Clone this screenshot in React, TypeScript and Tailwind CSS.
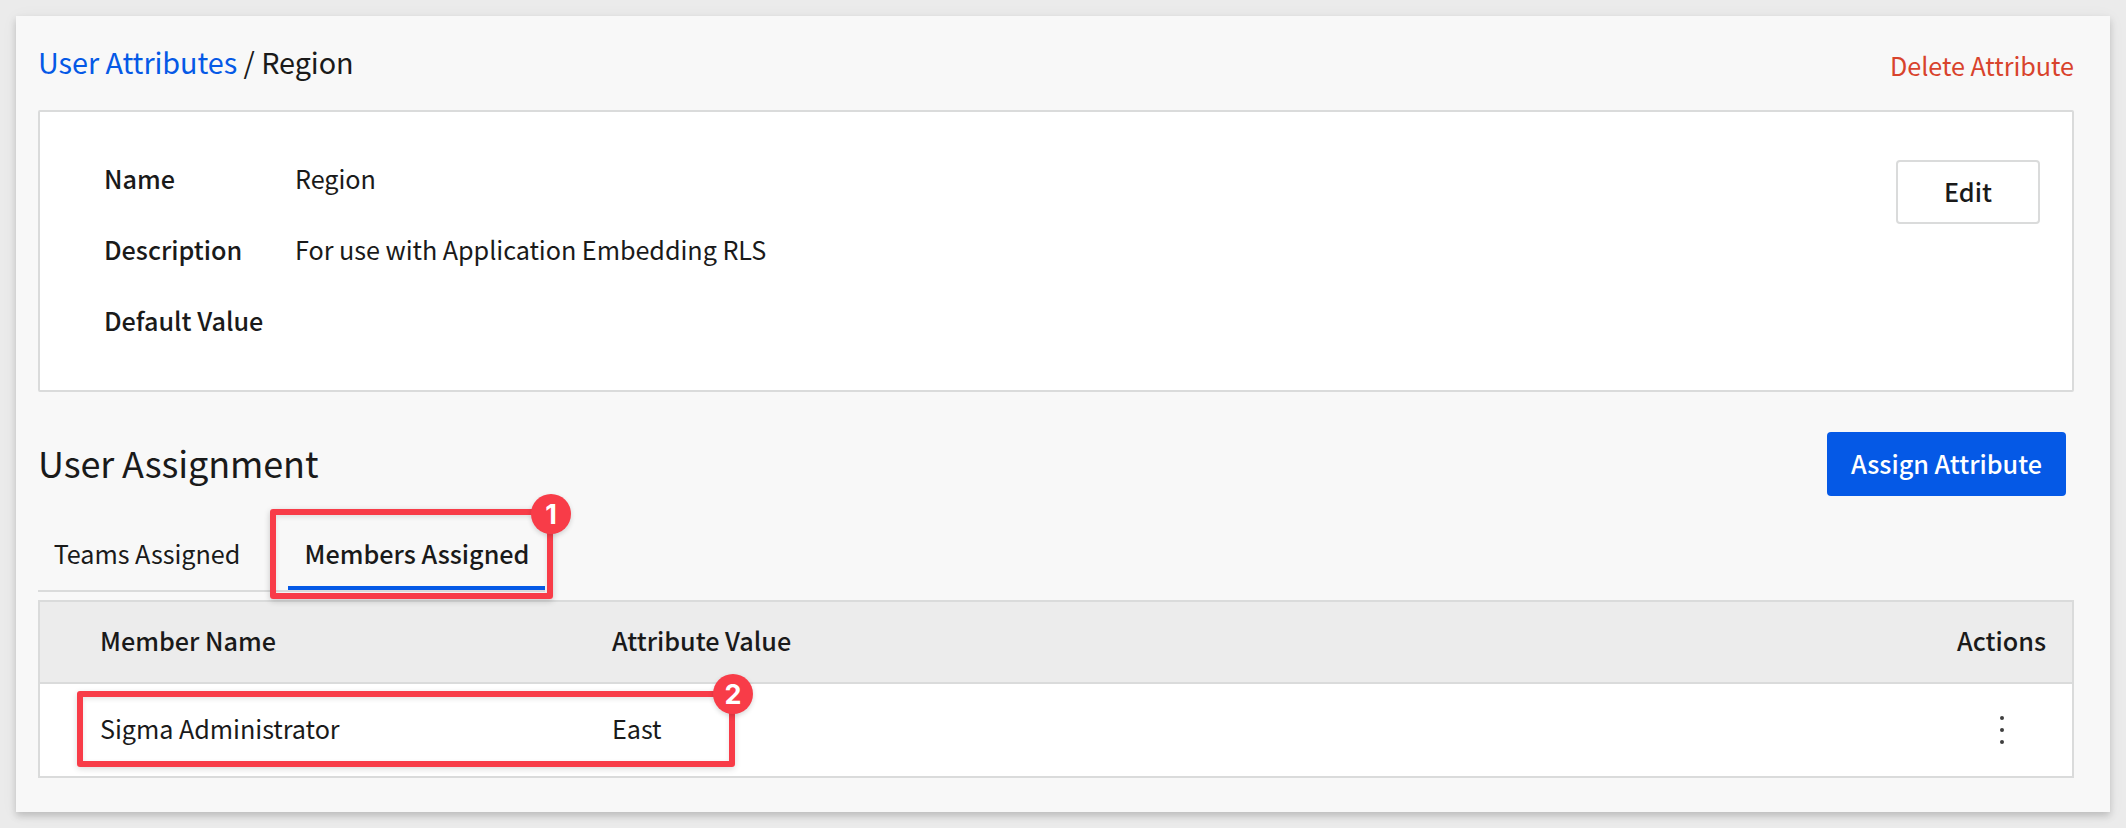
import type { ReactNode } from "react";

const details = [
  { label: "Name", value: "Region" },
  { label: "Description", value: "For use with Application Embedding RLS" },
  { label: "Default Value", value: "" },
];

const members = [{ name: "Sigma Administrator", value: "East" }];

function Badge({ className, children }: { className: string; children: ReactNode }) {
  return (
    <span
      className={`absolute flex h-10 w-10 items-center justify-center rounded-full bg-[#f83c48] font-['Inter',sans-serif] text-[27px] leading-none font-bold tracking-normal text-white shadow-[0_2px_5px_rgba(0,0,0,0.16)] ${className}`}
    >
      {children}
    </span>
  );
}

function Header() {
  return (
    <header className="flex h-[94px] items-start justify-between">
      <h1 className="mt-[26px] text-[28.8px] leading-[40px] tracking-[-0.06px]">
        <a href="#" className="text-[#0559e6]">
          User Attributes
        </a>{" "}
        / Region
      </h1>
      <button className="mt-[29px] leading-[40px] text-[#d8432c]">Delete Attribute</button>
    </header>
  );
}

function Details() {
  return (
    <section className="flex h-[282px] items-start justify-between rounded-[2px] border-2 border-[#dadbdb] bg-white pr-8 pl-16">
      <dl className="mt-[30px]">
        {details.map((row) => (
          <div key={row.label} className="flex h-[71px] items-center">
            <dt className="w-[191px] font-medium tracking-normal">{row.label}</dt>
            <dd>{row.value}</dd>
          </div>
        ))}
      </dl>
      <button className="mt-12 flex h-16 w-36 items-center justify-center rounded-[4px] border-2 border-[#dadbdb] bg-white pb-[2px] font-medium tracking-normal">
        Edit
      </button>
    </section>
  );
}

function Tabs() {
  return (
    <nav className="relative flex h-[78px] w-[507px] items-stretch gap-8 border-b-2 border-[#dadbdb]">
      <button className="w-[218px] pt-[2px]">Teams Assigned</button>
      <button className="w-[257px] border-b-4 border-[#0559e6] pt-[6px] pl-px font-medium tracking-normal">
        Members Assigned
      </button>
      <div className="pointer-events-none absolute top-[-5px] left-[232px] h-[90px] w-[283px] rounded-[3px] border-6 border-[#f83c48] shadow-[0_2px_6px_rgba(0,0,0,0.2),inset_0_2px_5px_rgba(0,0,0,0.1)]">
        <Badge className="-top-[21px] -right-[24px]">1</Badge>
      </div>
    </nav>
  );
}

function MembersTable() {
  return (
    <section className="mt-2 h-[178px] border-2 border-[#dadbdb] bg-white">
      <div className="flex h-[82px] items-center border-b-2 border-[#dadbdb] bg-[#ececec] pr-[26px] pb-[4px] pl-[60px] font-medium tracking-normal">
        <div className="w-[512px]">Member Name</div>
        <div className="flex-1">Attribute Value</div>
        <div>Actions</div>
      </div>
      {members.map((m) => (
        <div key={m.name} className="relative flex h-[92px] items-center pr-[68px] pl-[60px]">
          <div className="w-[512px] pb-[4px]">{m.name}</div>
          <div className="flex-1 pb-[4px]">{m.value}</div>
          <button className="flex flex-col gap-2" aria-label="More actions">
            <span className="size-1 rounded-full bg-[#3f3f3f]" />
            <span className="size-1 rounded-full bg-[#3f3f3f]" />
            <span className="size-1 rounded-full bg-[#3f3f3f]" />
          </button>
          <div className="pointer-events-none absolute top-[7px] left-[37px] h-[76px] w-[658px] rounded-[3px] border-6 border-[#f83c48] shadow-[0_2px_6px_rgba(0,0,0,0.14),inset_0_2px_5px_rgba(0,0,0,0.1)]">
            <Badge className="-top-[23px] -right-[24px]">2</Badge>
          </div>
        </div>
      ))}
    </section>
  );
}

export default function App() {
  return (
    <div className="h-[828px] overflow-hidden bg-[#ebebeb] p-4 font-['Noto_Sans_CJK_SC','Noto_Sans',sans-serif] text-[25.2px] leading-[36px] tracking-[-0.05px] whitespace-nowrap text-[#1a1a1a]">
      <main className="h-[796px] bg-[#f8f8f8] pr-9 pl-[22px] shadow-[0_4px_7px_rgba(0,0,0,0.17),0_2px_16px_rgba(0,0,0,0.05)]">
        <Header />
        <Details />
        <div className="flex h-[122px] items-start justify-between pr-2">
          <h2 className="mt-[45px] text-[36px] leading-[50px] tracking-[-0.12px]">User Assignment</h2>
          <button className="mt-10 flex h-16 w-[239px] items-center justify-center rounded-[4px] bg-[#0559e6] pb-[2px] font-medium tracking-normal text-white">
            Assign Attribute
          </button>
        </div>
        <Tabs />
        <MembersTable />
      </main>
    </div>
  );
}
